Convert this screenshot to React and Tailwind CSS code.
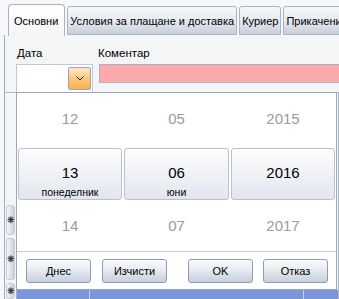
import React from 'react';

const FONT = "font-['Segoe_UI','Liberation_Sans',Arial,sans-serif]";

function Tab({ label, active }) {
  if (active) {
    return (
      <div className="relative z-10 h-[32px] -mb-[1px] pl-[5px] pr-[6px] pt-[8px] border border-b-0 border-[#a9b3c3] rounded-t-[4px] bg-gradient-to-b from-white to-[#f4f5f7] text-[11px] leading-[16px] whitespace-nowrap">
        {label}
      </div>
    );
  }
  return (
    <div className="h-[29px] px-[2px] pt-[6px] border border-[#a9b3c3] rounded-t-[3px] bg-gradient-to-b from-[#f7f8fa] via-[#e6eaf0] to-[#c7cfdb] text-[11px] leading-[16px] whitespace-nowrap">
      {label}
    </div>
  );
}

function Btn({ children }) {
  return (
    <div className="w-[65px] h-[24px] flex items-center justify-center border border-[#8e9cb2] rounded-[3px] bg-gradient-to-b from-[#fafbfd] via-[#e4e9f0] to-[#c6cfdc] text-[11px] shadow-[inset_0_1px_0_#ffffff]">
      {children}
    </div>
  );
}

function RowHead({ h }) {
  return (
    <div className={`${h} rounded-[3px] border border-[#c3cad6] bg-gradient-to-r from-[#f4f6f9] to-[#c9d0db] flex items-center justify-center text-[9px] leading-none text-[#111]`}>
      ❋
    </div>
  );
}

const rows = [
  { cells: ['12', '05', '2015'] },
  { cells: ['13', '06', '2016'], sub: ['понеделник', 'юни', ''] },
  { cells: ['14', '07', '2017'] },
];

export default function App() {
  return (
    <div className={`relative w-[339px] h-[299px] overflow-hidden bg-[#f6f7f9] text-black ${FONT}`}>
      {/* tab strip */}
      <div className="h-[35px] flex items-end pl-[8px] gap-[2px]">
        <Tab label="Основни" active />
        <Tab label="Условия за плащане и доставка" />
        <Tab label="Куриер" />
        <Tab label="Прикачени" />
      </div>

      {/* tab body */}
      <div className="ml-[4px] h-[264px] border-l border-[#9fadc3] bg-[#f4f5f7] flex flex-col">
        <div className="flex h-[29px] items-end pb-[3px] text-[11.5px] leading-[15px]">
          <span className="ml-[12px] w-[81px]">Дата</span>
          <span>Коментар</span>
        </div>
        <div className="flex h-[29px] items-start">
          <div className="ml-[11px] w-[77px] h-[29px] bg-white border border-[#c2c9d4] flex items-center justify-end pr-[1px]">
            <div className="w-[23px] h-[23px] border border-[#9aa6b8] rounded-[2px] bg-gradient-to-b from-[#fde8c4] via-[#fcc77c] to-[#fbb04a] flex items-center justify-center">
              <svg width="8" height="5" viewBox="0 0 8 5">
                <polyline points="0.5,0.5 4,4 7.5,0.5" fill="none" stroke="#222" strokeWidth="1" />
              </svg>
            </div>
          </div>
          <div className="ml-[6px] flex-1 h-[19px] bg-[#ffaaaa] border-t border-b border-l border-[#a7b3c6]" />
        </div>

        {/* grid behind popup */}
        <div className="flex-1 flex border-t border-[#aeb8c6] mt-[-1px]">
          <div className="w-[12px] border-r border-[#9fadc3] flex flex-col justify-end gap-[3px] px-[1px]">
            <RowHead h="h-[30px]" />
            <RowHead h="h-[42px]" />
            <RowHead h="h-[16px]" />
          </div>
          <div className="flex-1 flex flex-col justify-end border-r border-[#aeb8c6]">
            <div className="h-[9px] bg-[#7b97da] flex">
              <div className="w-[73px] border-r border-[#c4d0ee]" />
              <div className="w-[214px] border-r border-[#c4d0ee]" />
            </div>
          </div>
        </div>
      </div>

      {/* date picker popup */}
      <div className="absolute left-[16px] top-[92px] w-[321px] h-[198px] bg-white border border-[#9ca7b8] flex flex-col">
        <div className="grid grid-cols-[104px_105px_104px] grid-rows-[53px_52px_49px] gap-[2px] px-[1px]">
          {rows.map((r, ri) =>
            r.cells.map((c, ci) =>
              ri === 1 ? (
                <div
                  key={`${ri}-${ci}`}
                  className="border border-[#bac2ce] rounded-[3px] bg-gradient-to-b from-[#fdfdfe] to-[#e2e6ed] flex flex-col items-center pt-[14px]"
                >
                  <span className="text-[15px] leading-[20px]">{c}</span>
                  <span className="text-[10.5px] leading-[14px] mt-[2px]">{r.sub[ci]}</span>
                </div>
              ) : (
                <div key={`${ri}-${ci}`} className="flex items-center justify-center text-[15px] text-[#9b9b9b]">
                  {c}
                </div>
              )
            )
          )}
        </div>
        <div className="flex-1 border-t border-[#c5ccd6] flex justify-between pt-[7px] pl-[9px] pr-[8px]">
          <div className="flex gap-[11px]">
            <Btn>Днес</Btn>
            <Btn>Изчисти</Btn>
          </div>
          <div className="flex gap-[10px]">
            <Btn>OK</Btn>
            <Btn>Отказ</Btn>
          </div>
        </div>
      </div>
    </div>
  );
}
